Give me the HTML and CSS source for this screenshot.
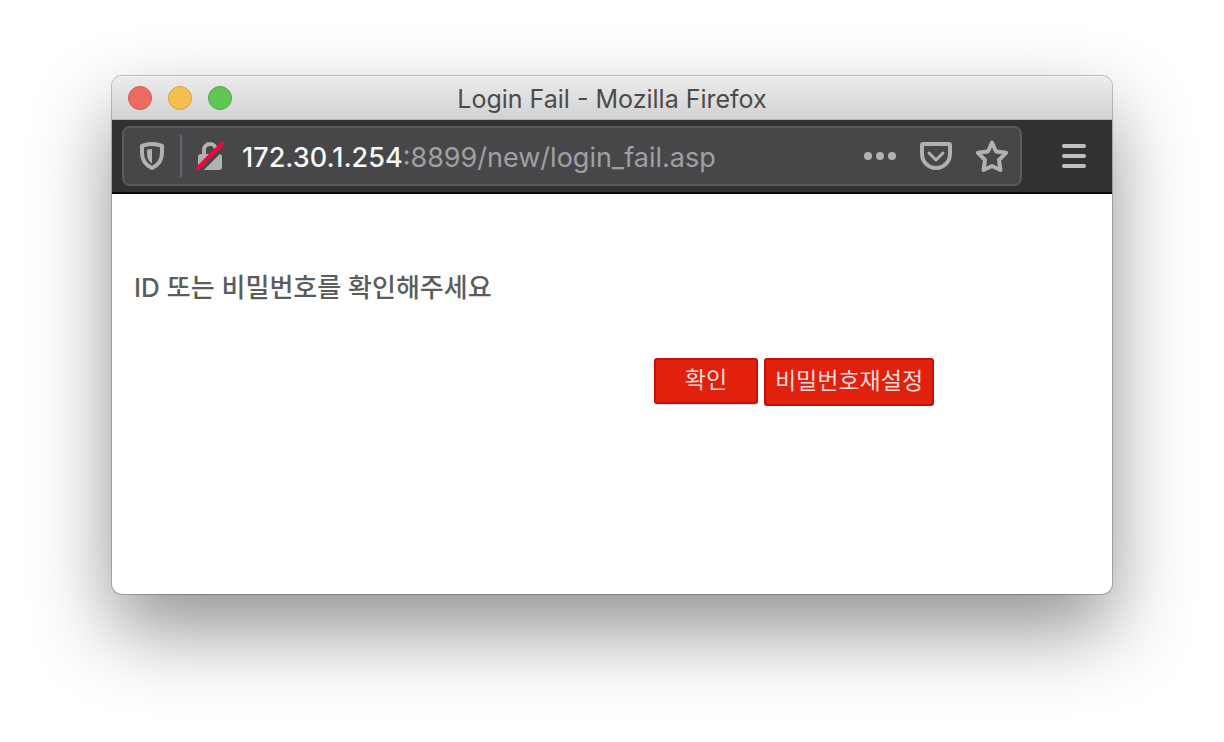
FILE: index.html
```html
<!DOCTYPE html>
<html lang="ko">
<head>
  <meta charset="UTF-8">
  <meta name="viewport" content="width=device-width, initial-scale=1.0">
  <title>Login Fail</title>
  <link rel="stylesheet" href="styles.css">
</head>
<body>
  <div class="window">
    <header class="titlebar">
      <div class="lights">
        <button type="button" class="light red" aria-label="Close"></button>
        <button type="button" class="light yellow" aria-label="Minimize"></button>
        <button type="button" class="light green" aria-label="Zoom"></button>
      </div>
      <h1 class="title">Login Fail - Mozilla Firefox</h1>
    </header>

    <nav class="toolbar">
      <div class="urlbar">
        <button type="button" class="icon shield" aria-label="Tracking protection">
          <svg width="32" height="32" viewBox="0 0 32 32">
            <path d="M16 4C12.500 4 9 4.600 6 5.800V13c0 7 3.500 12 10 15 6.500-3 10-8 10-15V5.800C23 4.600 19.500 4 16 4z" fill="none" stroke="#b1b1b3" stroke-width="4" stroke-linejoin="round"/>
            <path d="M16 9c-2 0-3.600.3-5 .8V14c0 4.500 1.800 7.500 5 9.500z" fill="#b1b1b3"/>
          </svg>
        </button>
        <span class="divider"></span>
        <button type="button" class="icon lock" aria-label="Connection is not secure">
          <svg width="32" height="32" viewBox="0 0 32 32">
            <path d="M10 15v-5a6 6 0 0 1 12 0v5" fill="none" stroke="#b1b1b3" stroke-width="4"/>
            <path d="M7 14h18a3 3 0 0 1 3 3v10a3 3 0 0 1-3 3H7a3 3 0 0 1-3-3V17a3 3 0 0 1 3-3z" fill="#b1b1b3"/>
            <path d="M6 31L31 6" stroke="#474749" stroke-width="4"/>
            <path d="M4 28L28 4" stroke="#ff0039" stroke-width="4" stroke-linecap="round"/>
          </svg>
        </button>
        <label class="host" for="url">172.30.1.254</label>
        <input class="path" type="text" id="url" value=":8899/new/login_fail.asp" spellcheck="false">
        <div class="actions">
          <button type="button" class="icon" aria-label="Page actions">
            <svg width="32" height="32" viewBox="0 0 32 32" fill="#b1b1b3">
              <circle cx="4" cy="16" r="4"/>
              <circle cx="16" cy="16" r="4"/>
              <circle cx="28" cy="16" r="4"/>
            </svg>
          </button>
          <button type="button" class="icon" aria-label="Save to Pocket">
            <svg width="32" height="32" viewBox="0 0 32 32" fill="none" stroke="#b1b1b3" stroke-linecap="round" stroke-linejoin="round">
              <path d="M3 4h26a1 1 0 0 1 1 1v9a14 14 0 0 1-28 0V5a1 1 0 0 1 1-1z" stroke-width="4"/>
              <path d="M9 13l7 7 7-7" stroke-width="3"/>
            </svg>
          </button>
          <button type="button" class="icon" aria-label="Bookmark this page">
            <svg width="32" height="32" viewBox="0 0 32 32" fill="none" stroke="#b1b1b3" stroke-width="4" stroke-linejoin="round">
              <path d="M16 2.500l4 9 10 1.300-7 7.200 1.500 10L16 26l-8.500 4L9 20l-7-7.200 10-1.300z"/>
            </svg>
          </button>
        </div>
      </div>
      <button type="button" class="icon menu" aria-label="Menu">
        <svg width="32" height="32" viewBox="0 0 32 32" stroke="#c0bfc1" stroke-width="4" stroke-linecap="round">
          <path d="M6 6h20M6 16h20M6 26h20"/>
        </svg>
      </button>
    </nav>

    <main class="page">
      <p class="message">ID 또는 비밀번호를 확인해주세요</p>
      <div class="buttons">
        <button type="button" class="btn ok">확인</button>
        <button type="button" class="btn reset">비밀번호재설정</button>
      </div>
    </main>
  </div>
</body>
</html>
```
FILE: styles.css
```css
* {
  box-sizing: border-box;
}
body {
  margin: 0;
  min-height: 100vh;
  padding: 76px 112px 148px;
  display: flex;
  background: #fff;
  font-family: Inter, "Noto Sans CJK KR", sans-serif;
}
button {
  border: 0;
  padding: 0;
  font-family: inherit;
}
.window {
  flex: 1;
  min-width: 0;
  display: flex;
  flex-direction: column;
  border-radius: 10px;
  overflow: hidden;
  background: #fff;
  box-shadow: 0 0 0 1px rgba(0,0,0,0.22), 0 36px 80px rgba(0,0,0,0.43);
}

/* title bar */
.titlebar {
  display: grid;
  grid-template-columns: 1fr auto 1fr;
  align-items: center;
  height: 44px;
  padding: 0 16px;
  background: linear-gradient(#ebebeb, #d2d2d2);
  border-top: 1px solid #f6f6f6;
  border-bottom: 1px solid #b4b4b4;
}
.lights {
  display: flex;
  gap: 16px;
}
.light {
  width: 24px;
  height: 24px;
  border-radius: 50%;
}
.red {
  background: #ed6a5e;
  border: 1px solid #d5554b;
}
.yellow {
  background: #f5bf4f;
  border: 1px solid #d9a23c;
}
.green {
  background: #61c554;
  border: 1px solid #4fac40;
}
.title {
  margin: 0;
  padding-top: 2px;
  font-size: 25px;
  line-height: 32px;
  font-weight: 400;
  color: #4b4b4b;
}

/* toolbar */
.toolbar {
  display: flex;
  align-items: center;
  height: 74px;
  padding: 0 22px 0 10px;
  background: #323234;
  border-bottom: 2px solid #0c0c0d;
}
.urlbar {
  flex: 1;
  min-width: 0;
  display: flex;
  align-items: center;
  height: 60px;
  padding: 0 12px;
  background: #474749;
  border: 2px solid #5a5a5c;
  border-radius: 8px;
}
.icon {
  display: flex;
  flex: none;
  background: none;
}
.divider {
  width: 2px;
  height: 42px;
  margin: 0 12px;
  background: #5f6670;
}
.host, .path {
  padding: 4px 0 0;
  font-size: 27px;
  line-height: 36px;
}
.host {
  margin-left: 16px;
  color: #f9f9fa;
  font-weight: 500;
}
.path {
  flex: 1;
  min-width: 0;
  border: 0;
  outline: 0;
  background: none;
  font-family: inherit;
  color: #a0a0a2;
}
.actions {
  display: flex;
  gap: 24px;
}
.menu {
  margin-left: 36px;
}

/* page */
.page {
  padding: 76px 178px 0 22px;
}
.message {
  margin: 0;
  font-size: 26px;
  line-height: 36px;
  font-weight: 500;
  color: #5c5c5c;
}
.buttons {
  display: flex;
  justify-content: flex-end;
  align-items: flex-start;
  gap: 6px;
  margin-top: 52px;
}
.btn {
  padding-bottom: 2px;
  font-size: 23px;
  line-height: 32px;
  color: #fbdcd8;
  background: #e1200d;
  border: 2px solid #cb0d08;
  border-radius: 3px;
}
.ok {
  width: 104px;
  height: 46px;
  box-shadow: 0 1px 0 #dcdcdc;
}
.reset {
  width: 170px;
  height: 48px;
}
```
